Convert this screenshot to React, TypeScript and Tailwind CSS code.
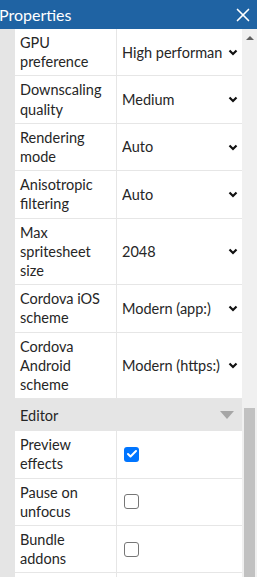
import React from 'react';
import { X, Check } from 'lucide-react';

type Row =
  | { kind: 'select'; label: string; value: string }
  | { kind: 'check'; label: string; checked: boolean }
  | { kind: 'section'; label: string }
  | { kind: 'blank'; label: string };

const rows: Row[] = [
  { kind: 'select', label: 'GPU preference', value: 'High performance' },
  { kind: 'select', label: 'Downscaling quality', value: 'Medium' },
  { kind: 'select', label: 'Rendering mode', value: 'Auto' },
  { kind: 'select', label: 'Anisotropic filtering', value: 'Auto' },
  { kind: 'select', label: 'Max spritesheet size', value: '2048' },
  { kind: 'select', label: 'Cordova iOS scheme', value: 'Modern (app:)' },
  { kind: 'select', label: 'Cordova Android scheme', value: 'Modern (https:)' },
  { kind: 'section', label: 'Editor' },
  { kind: 'check', label: 'Preview effects', checked: true },
  { kind: 'check', label: 'Pause on unfocus', checked: false },
  { kind: 'check', label: 'Bundle addons', checked: false },
  { kind: 'blank', label: 'next' },
];

function Chevron() {
  return (
    <svg width="10" height="7" viewBox="0 0 10 7" className="shrink-0">
      <polyline points="1.5,1.5 5,5 8.5,1.5" fill="none" stroke="#111" strokeWidth="2.2" />
    </svg>
  );
}

function PropRow({ row }: { row: Row }) {
  if (row.kind === 'section') {
    return (
      <div className="flex">
        <div className="w-[15px] shrink-0 bg-[#e5e5e5]" />
        <div className="flex h-[32px] min-w-0 flex-1 items-center justify-between bg-[#e5e5e5] pl-[5px] pr-[8px]">
          <span>{row.label}</span>
          <span className="h-0 w-0 border-x-[7px] border-t-[8px] border-x-transparent border-t-[#a6a6a6]" />
        </div>
      </div>
    );
  }

  return (
    <div className="flex">
      <div className="w-[15px] shrink-0 bg-[#e5e5e5]" />
      <div className="flex min-w-0 flex-1 border-b border-[#e6e6e6] bg-white">
        <div className="w-[102px] shrink-0 border-r border-[#e6e6e6] py-[4px] pl-[5px] pr-[6px]">
          {row.kind === 'blank' ? <span className="invisible">-</span> : row.label}
        </div>
        <div className="flex min-w-0 flex-1 items-center pl-[5px] pr-[4px]">
          {row.kind === 'select' ? (
            <div className="flex w-full min-w-0 items-center">
              <span className="min-w-0 flex-1 overflow-hidden whitespace-nowrap">{row.value}</span>
              <span className="ml-[6px] flex w-[10px] shrink-0 items-center">
                <Chevron />
              </span>
            </div>
          ) : row.kind === 'check' ? (
            row.checked ? (
              <span className="ml-[2px] flex h-[15px] w-[15px] items-center justify-center rounded-[3px] bg-[#0075ff]">
                <Check className="h-[12px] w-[12px] text-white" strokeWidth={4} />
              </span>
            ) : (
              <span className="ml-[2px] h-[15px] w-[15px] rounded-[3px] border-[1.5px] border-[#767676] bg-white" />
            )
          ) : null}
        </div>
      </div>
    </div>
  );
}

export default function App() {
  return (
    <div
      className="flex h-[577px] w-[257px] flex-col overflow-hidden bg-white text-[14.5px] leading-[19.2px] text-[#262626]"
      style={{ fontFamily: '"Segoe UI", Lato, sans-serif' }}
    >
      {/* Title bar */}
      <div className="flex h-[29px] shrink-0 items-center justify-between bg-[#1f63a3] pr-[3px] text-white">
        <span className="-ml-[1px] text-[16px]">Properties</span>
        <X className="h-[22px] w-[22px]" strokeWidth={1.8} />
      </div>

      {/* Grid + scrollbar */}
      <div className="flex min-h-0 flex-1">
        <div className="min-w-0 flex-1 overflow-hidden">
          {rows.map((r) => (
            <PropRow key={r.label} row={r} />
          ))}
        </div>
        <div className="flex w-[15px] shrink-0 flex-col bg-[#f0f0f0]">
          <div className="flex h-[17px] items-center justify-center">
            <span className="h-0 w-0 border-x-[4px] border-b-[4px] border-x-transparent border-b-[#606060]" />
          </div>
          <div className="flex-1 pt-[362px]">
            <div className="mx-[2px] h-full bg-[#c1c1c1]" />
          </div>
        </div>
      </div>
    </div>
  );
}
